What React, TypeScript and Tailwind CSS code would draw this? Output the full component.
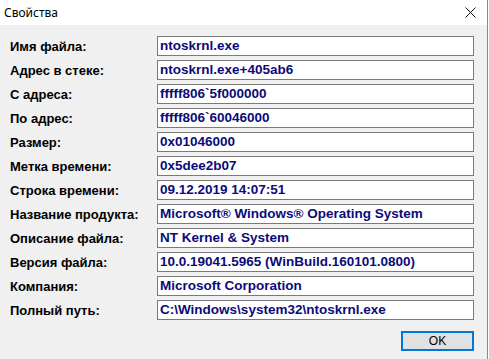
import React from "react";

const rows: [string, string][] = [
  ["Имя файла:", "ntoskrnl.exe"],
  ["Адрес в стеке:", "ntoskrnl.exe+405ab6"],
  ["С адреса:", "fffff806`5f000000"],
  ["По адрес:", "fffff806`60046000"],
  ["Размер:", "0x01046000"],
  ["Метка времени:", "0x5dee2b07"],
  ["Строка времени:", "09.12.2019 14:07:51"],
  ["Название продукта:", "Microsoft® Windows® Operating System"],
  ["Описание файла:", "NT Kernel & System"],
  ["Версия файла:", "10.0.19041.5965 (WinBuild.160101.0800)"],
  ["Компания:", "Microsoft Corporation"],
  ["Полный путь:", "C:\\Windows\\system32\\ntoskrnl.exe"],
];

export default function App() {
  return (
    <div className="w-[489px] h-[359px] bg-white flex">
      <div className="w-[488px] h-[359px] border-r border-[#8a8a8a] flex flex-col">
        <div className="h-[25px] bg-white flex items-center justify-between pl-[4px] pr-[11px]">
          <span
            className="text-[12px] text-black leading-none"
            style={{ fontFamily: '"Noto Sans", "Open Sans", sans-serif' }}
          >
            Свойства
          </span>
          <svg width="11" height="11" viewBox="0 0 11 11">
            <path d="M0.5 0.5 L10.5 10.5 M10.5 0.5 L0.5 10.5" stroke="#111" strokeWidth="1" fill="none" />
          </svg>
        </div>
        <div
          className="flex-1 bg-[#f0f0f0] pt-[11px] pl-[10px] pr-[13px] flex flex-col"
          style={{ fontFamily: '"Liberation Sans", Arial, sans-serif' }}
        >
          <div className="flex flex-col gap-[4px]">
            {rows.map(([label, value]) => (
              <div key={label} className="flex items-center h-[20px]">
                <div className="w-[147px] text-[13px] font-bold text-black leading-none">{label}</div>
                <div className="flex-1 h-[20px] bg-white border border-[#7a7a7a] flex items-center pl-[2px] text-[13.5px] font-bold text-[#0b0b7a] leading-none whitespace-nowrap overflow-hidden">
                  {value}
                </div>
              </div>
            ))}
          </div>
          <div className="flex justify-end mt-[11px]">
            <div className="w-[73px] h-[20px] border-2 border-[#0078d7] bg-[#e1e1e1] flex items-center justify-center text-[12px] text-black leading-none">
              OK
            </div>
          </div>
        </div>
      </div>
    </div>
  );
}
